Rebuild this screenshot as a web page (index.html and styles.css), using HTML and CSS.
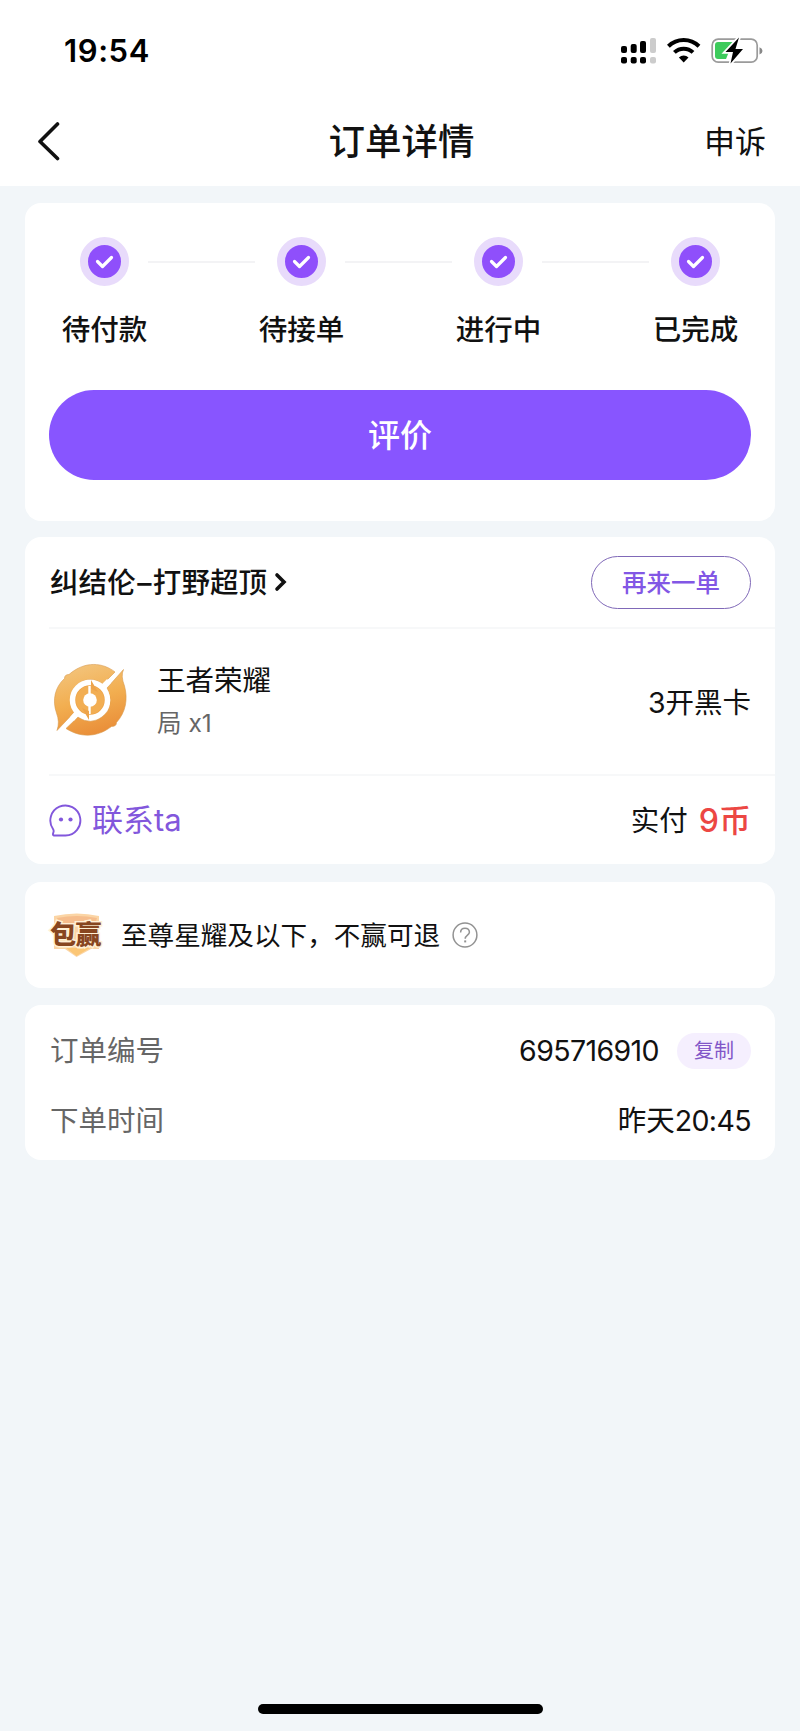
FILE: index.html
```html
<!DOCTYPE html>
<html lang="zh-CN">
<head>
<meta charset="UTF-8">
<title>订单详情</title>
<link rel="stylesheet" href="styles.css">
</head>
<body>
<div class="screen">
  <header class="header">
    <div class="status">
      <span class="clock">19:54</span>
      <svg class="status-icons" width="144" height="28" viewBox="0 0 144 28">
        <g fill="#000">
          <rect x="1" y="9" width="6" height="7" rx="2"/><rect x="10.7" y="7" width="6" height="9" rx="2"/><rect x="20" y="4" width="6" height="12" rx="2"/>
          <rect x="1" y="20" width="6" height="6.5" rx="2"/><rect x="10.7" y="20" width="6" height="6.5" rx="2"/><rect x="20" y="20" width="6" height="6.5" rx="2"/>
        </g>
        <g fill="#ccc"><rect x="30" y="1" width="6" height="15" rx="2"/><rect x="30" y="20" width="6" height="6.5" rx="2"/></g>
        <g fill="none" stroke="#000" stroke-width="4">
          <path d="M48.400 9.200a22 22 0 0 1 30.600 0"/>
          <path d="M54.400 15.400a13.500 13.500 0 0 1 18.600 0"/>
        </g>
        <path d="M58.900 20.400a7 7 0 0 1 9.600 0L63.700 25.400z"/>
        <rect x="92.200" y="2.200" width="45" height="23" rx="6" fill="#fff" stroke="#9b9b9b" stroke-width="1.700"/>
        <path d="M98 5h15l-7 17h-8q-3 0-3-3V8q0-3 3-3z" fill="#3dcb5c"/>
        <path d="M139.500 10.300q3 1.200 3 3.600t-3 3.600z" fill="#888"/>
        <path d="M119 .5 105.500 15h7.500l-2.500 11.500L123 12h-7.500z" stroke="#fff" stroke-width="3.500" paint-order="stroke"/>
      </svg>
    </div>
    <nav class="nav">
      <svg class="back" width="24" height="40" viewBox="0 0 24 40"><path d="M20.500 2 3 19.500 20.500 36.500" fill="none" stroke="#111" stroke-width="3.600" stroke-linecap="round" stroke-linejoin="round"/></svg>
      <h1 class="title">订单详情</h1>
      <span class="appeal">申诉</span>
    </nav>
  </header>

  <main class="content">
    <section class="card progress">
      <div class="steps">
        <div class="step"><span class="dot"><svg width="49" height="49"><path d="M17.500 24.500 22.500 29.500 31.500 20.500"/></svg></span><span class="step-label">待付款</span></div>
        <i class="line"></i>
        <div class="step"><span class="dot"><svg width="49" height="49"><path d="M17.500 24.500 22.500 29.500 31.500 20.500"/></svg></span><span class="step-label">待接单</span></div>
        <i class="line"></i>
        <div class="step"><span class="dot"><svg width="49" height="49"><path d="M17.500 24.500 22.500 29.500 31.500 20.500"/></svg></span><span class="step-label">进行中</span></div>
        <i class="line"></i>
        <div class="step"><span class="dot"><svg width="49" height="49"><path d="M17.500 24.500 22.500 29.500 31.500 20.500"/></svg></span><span class="step-label">已完成</span></div>
      </div>
      <div class="rate">评价</div>
    </section>

    <section class="card order">
      <div class="row seller">
        <div class="seller-name"><span>纠结伦<span class="dash">–</span>打野超顶</span>
          <svg width="14" height="20" viewBox="0 0 14 20"><path d="M3 3 10 10 3 17" fill="none" stroke="#111" stroke-width="3.600" stroke-linecap="round"/></svg>
        </div>
        <div class="again">再来一单</div>
      </div>
      <div class="row game">
        <svg class="game-icon" width="82" height="82" viewBox="0 0 82 82">
          <defs><linearGradient id="gold" x1="0.300" y1="0" x2="0.600" y2="1"><stop offset="0" stop-color="#f3c47c"/><stop offset="0.500" stop-color="#f2ae50"/><stop offset="1" stop-color="#e98d38"/></linearGradient></defs>
          <path fill="url(#gold)" stroke="#d99a4e" stroke-width="0.600" d="M8 71.500Q11 63 7.500 54C3 41 6 28 15.500 19.500Q15.500 15.500 20 15.500C36 1.500 54 3.500 66 13L54 25Q41 16 29 25T25 53.500zM74.500 10.500Q71.500 17 75.500 27C79 40 77 53 67.500 63.500Q67.500 67.500 62.500 67.500C47 79.500 30 78 17 69.500L29 58Q42 67 54 57T58 29z"/>
          <circle cx="41" cy="41" r="17.500" fill="#eea449" stroke="#fff" stroke-width="5.500"/>
          <path d="M23 60 30 52M52 30 60 22" stroke="#fff" stroke-width="5.500"/>
          <circle cx="41" cy="41" r="14" fill="#f2ae53"/>
          <circle cx="41" cy="41" r="6.800" fill="#fff"/>
          <path d="M40.500 27v28" stroke="#fff" stroke-width="2.400"/>
          <path d="M42 21v9l7 3zM40 61v-9l-7-3z" fill="#eda34a"/>
        </svg>
        <div class="game-info"><div class="game-name">王者荣耀</div><div class="game-count">局 x1</div></div>
        <div class="game-type">3开黑卡</div>
      </div>
      <div class="row pay">
        <div class="contact">
          <svg width="33" height="33" viewBox="0 0 33 33"><path d="M5 31.500H16.500A15 15 0 1 0 4 25Q5 26.500 4.500 28L4 29.800Q3.800 31.500 5 31.500z" fill="none" stroke="#8257dc" stroke-width="1.900"/><circle cx="12" cy="15.500" r="2.100" fill="#8257dc"/><circle cx="21.500" cy="15.500" r="2.100" fill="#8257dc"/></svg>
          <span>联系ta</span>
        </div>
        <div class="paid"><span>实付</span><b class="price">9币</b></div>
      </div>
    </section>

    <section class="card promise">
      <div class="badge">
        <svg width="56" height="48" viewBox="0 0 56 48"><path d="M5 5Q28 0 50 5V38H42L27.500 46 16 38H5z" fill="#fbd5a5"/><path d="M8 7Q28 3 48 7L46 14H10z" fill="#f6bd8c"/><path d="M17 37H41L27.500 45z" fill="#fbc675"/></svg>
        <span class="badge-text">包赢</span>
      </div>
      <span class="promise-text">至尊星耀及以下，不赢可退</span>
      <svg class="help" width="26" height="26" viewBox="0 0 26 26" fill="none" stroke="#929292" stroke-width="1.500"><circle cx="13" cy="13" r="11.900"/><path d="M8.600 10.500Q8.700 6.300 13 6.300T17.400 10.300C17.400 13 13.200 13.300 13.200 16.700"/><path d="M13.200 18.400v2" stroke-width="2"/></svg>
    </section>

    <section class="card meta">
      <div class="meta-row"><span class="meta-label">订单编号</span><span class="meta-value"><span class="number">695716910</span><span class="copy">复制</span></span></div>
      <div class="meta-row"><span class="meta-label">下单时间</span><span class="meta-value">昨天<span class="number">20:45</span></span></div>
    </section>
  </main>
  <div class="home-bar"></div>
</div>
</body>
</html>
```
FILE: styles.css
```css
* { box-sizing: border-box; margin: 0; padding: 0; }
body {
  font-family: Inter, "Noto Sans CJK SC", sans-serif;
  font-size: 28.5px;
  color: #111;
  background: #f2f6f9;
}
svg { display: block; flex: none; }
.screen { width: 800px; height: 1731px; display: flex; flex-direction: column; align-items: center; overflow: hidden; }
.header { width: 800px; height: 186px; background: #fff; }
.status { height: 98px; padding: 37px 36px 0 64px; display: flex; justify-content: space-between; align-items: flex-start; }
.clock { font-size: 31px; font-weight: 600; line-height: 28px; letter-spacing: 0.6px; color: #000; }
.nav { height: 88px; padding: 0 34px 0 37px; display: grid; grid-template-columns: 100px 1fr 100px; align-items: center; }
.title { text-align: center; font-size: 36.5px; font-weight: 500; line-height: 50px; }
.appeal { text-align: right; font-size: 31px; line-height: 44px; }

.content { padding-top: 17px; display: flex; flex-direction: column; gap: 17px; flex: 1; }
.card { width: 750px; background: #fff; border-radius: 16px; }

.progress { height: 318px; padding: 34px 24px 0; }
.steps { display: flex; justify-content: space-between; padding: 0 12px; }
.step { width: 87px; display: flex; flex-direction: column; align-items: center; }
.dot { width: 49px; height: 49px; border-radius: 50%; border: 8px solid #e8dbfb; background: #8f4ffb; display: flex; align-items: center; justify-content: center; }
.dot path { fill: none; stroke: #fff; stroke-width: 3.2; stroke-linecap: round; stroke-linejoin: round; }
.step-label { margin-top: 23px; line-height: 42px; font-weight: 500; white-space: nowrap; }
.line { width: 107px; height: 2px; margin: 24px 2px 0 -2px; background: #f3f3f5; }
.rate { height: 90px; margin-top: 39px; border-radius: 45px; background: #8855ff; color: #fff; font-size: 32px; font-weight: 500; line-height: 92px; text-align: center; }

.order { height: 327px; padding-left: 24px; margin-top: -1px; }
.row { display: flex; align-items: center; justify-content: space-between; padding-right: 24px; }
.seller { height: 92px; border-bottom: 2px solid #f7f8f9; }
.seller-name { display: flex; align-items: center; gap: 7px; font-weight: 500; line-height: 44px; letter-spacing: 0.1px; padding-left: 1px; }
.seller-name > span { position: relative; top: 1px; }
.dash { display: inline-block; width: 17px; text-align: center; }
.again { width: 160px; height: 53px; border: 1.5px solid #8069b8; border-radius: 27px; color: #8257e5; font-size: 24.5px; font-weight: 500; line-height: 52px; text-align: center; }
.game { height: 147px; padding-bottom: 3px; border-bottom: 2px solid #f7f8f9; }
.game-info { margin-left: 26px; flex: 1; }
.game-name { line-height: 42px; }
.game-count { font-size: 24.5px; line-height: 36px; color: #666; margin-top: 3px; }
.pay { height: 88px; }
.contact { display: flex; align-items: center; gap: 10px; color: #8257dc; font-size: 31px; line-height: 44px; }
.paid { display: flex; align-items: center; gap: 11px; line-height: 42px; padding-top: 1px; }
.price { color: #ec4743; font-size: 32px; font-weight: 500; }

.promise { height: 106px; padding-left: 24px; display: flex; align-items: center; margin-top: 1px; }
.badge { position: relative; width: 56px; height: 48px; }
.badge-text { position: absolute; left: 1px; top: 9px; font-size: 26px; font-weight: 900; line-height: 30px; letter-spacing: -0.5px; color: #88461f; -webkit-text-stroke: 3px #fff0d4; paint-order: stroke fill; white-space: nowrap; }
.promise-text { margin-left: 16px; font-size: 26.6px; line-height: 40px; }
.help { margin-left: 12px; }

.meta { height: 155px; padding: 11px 24px 0; }
.meta-row { height: 70px; display: flex; align-items: center; justify-content: space-between; line-height: 42px; }
.meta-label { color: #666; padding-left: 1px; }
.meta-value { display: flex; align-items: center; }
.number { letter-spacing: -0.6px; }
.copy { width: 74px; height: 36px; margin-left: 18px; border-radius: 18px; background: #f5effe; color: #8257c8; font-size: 20px; line-height: 36px; text-align: center; }

.home-bar { width: 285px; height: 10px; margin-bottom: 17px; border-radius: 5px; background: #000; flex: none; }
```
